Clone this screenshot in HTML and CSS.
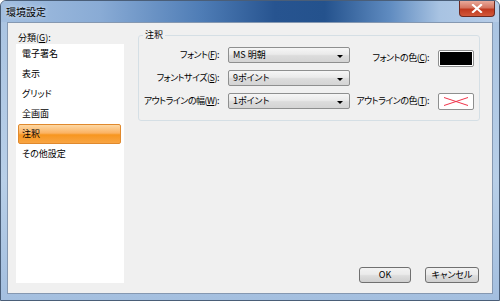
FILE: index.html
```html
<!DOCTYPE html>
<html>
<head>
    <meta charset="UTF-8">
    <title>環境設定</title>
    <link rel="stylesheet" href="styles.css">
</head>
<body>
    <div class="window">
        <div class="titlebar">
            <span class="title">環境設定</span>
            <div class="close-btn">
                <svg width="12" height="9" viewBox="0 0 12 9">
                    <path d="M2 1 L10 8 M10 1 L2 8" stroke="#fff" stroke-width="2.2" stroke-linecap="square"/>
                </svg>
            </div>
        </div>

        <div class="client">
            <div class="side">
                <div class="side-label">分類(<u>G</u>):</div>
                <ul class="category-list">
                    <li>電子署名</li>
                    <li>表示</li>
                    <li>グリッド</li>
                    <li>全画面</li>
                    <li class="selected">注釈</li>
                    <li>その他設定</li>
                </ul>
            </div>

            <div class="main">
                <fieldset class="group">
                    <legend>注釈</legend>
                    <div class="form-grid">
                        <label class="label">フォント(<u>F</u>):</label>
                        <div class="combo"><span>MS 明朝</span><span class="arrow"></span></div>
                        <label class="label label-color">フォントの色(<u>C</u>):</label>
                        <div class="swatch swatch-black"><div class="swatch-fill"></div></div>

                        <label class="label">フォントサイズ(<u>S</u>):</label>
                        <div class="combo"><span>9ポイント</span><span class="arrow"></span></div>
                        <div></div>
                        <div></div>

                        <label class="label">アウトラインの幅(<u>W</u>):</label>
                        <div class="combo"><span>1ポイント</span><span class="arrow"></span></div>
                        <label class="label">アウトラインの色(<u>T</u>):</label>
                        <div class="swatch">
                            <svg width="34" height="15" viewBox="0 0 34 15">
                                <path d="M5 3.5 L29 11.5 M5 11.5 L29 3.5" stroke="#f0334a" stroke-width="1"/>
                            </svg>
                        </div>
                    </div>
                </fieldset>

                <div class="buttons">
                    <button class="btn btn-ok">OK</button>
                    <button class="btn btn-cancel">キャンセル</button>
                </div>
            </div>
        </div>
    </div>
</body>
</html>
```

FILE: styles.css
```css
body {
    margin: 0;
    padding: 0;
    font-family: "Noto Sans CJK JP", "Liberation Sans", sans-serif;
    font-size: 9px;
    font-feature-settings: "palt";
    color: #000;
    background: #fff;
}

u {
    text-decoration-thickness: 1px;
    text-underline-offset: 1px;
}

.window {
    width: 500px;
    height: 301px;
    box-sizing: border-box;
    display: flex;
    flex-direction: column;
    border: 1px solid #4a5e78;
    border-radius: 6px 6px 0 0;
    background: linear-gradient(to bottom, #a9c3e1, #b8cfe8 60%, #a4bfdf);
    overflow: hidden;
}

.titlebar {
    height: 21px;
    display: flex;
    align-items: flex-start;
    justify-content: space-between;
    background: linear-gradient(to right, #a3bfe0 0%, #89abd5 20%, #4f7db6 40%, #275490 55%, #24528d 65%, #5f8bc0 78%, #a8c3e2 88%, #b7cde8 100%);
}

.title {
    padding: 4px 0 0 5px;
    font-size: 10px;
    line-height: 13px;
    text-shadow: 0 0 4px rgba(255, 255, 255, 0.8);
}

.close-btn {
    width: 36px;
    height: 16px;
    margin-right: 4px;
    box-sizing: border-box;
    display: flex;
    align-items: center;
    justify-content: center;
    border: 1px solid #6d2a22;
    border-top: none;
    border-radius: 0 0 4px 4px;
    background: linear-gradient(to bottom, #e9a99a 0%, #d47561 45%, #c0391f 55%, #d2583a 100%);
}

.client {
    flex: 1;
    display: flex;
    margin: 0 6px 6px 6px;
    border: 1px solid #8598b1;
    background: #f0f0f0;
}

.side {
    width: 108px;
    flex-shrink: 0;
    padding: 9px 0 10px 8px;
    display: flex;
    flex-direction: column;
}

.side-label {
    padding-left: 2px;
    height: 12px;
    line-height: 12px;
}

.category-list {
    list-style: none;
    margin: 0;
    padding: 0 3px 0 2px;
    flex: 1;
    background: #fff;
}

.category-list li {
    height: 20px;
    line-height: 20px;
    padding-left: 4px;
}

.category-list .selected {
    height: 18px;
    line-height: 18px;
    padding-left: 3px;
    border: 1px solid #e0892d;
    border-radius: 2px;
    background: linear-gradient(to bottom, #fdd8a4 0%, #fbb262 45%, #f7961f 55%, #f8a544 100%);
}

.main {
    flex: 1;
    min-width: 0;
    margin-left: 14px;
    margin-right: 12px;
    padding: 6px 0 10px 0;
    display: flex;
    flex-direction: column;
}

.group {
    margin: 0;
    min-width: 0;
    padding: 0 0 11px 0;
    border: 1px solid #d5dfe5;
    border-radius: 3px;
}

.group legend {
    margin-left: 4px;
    padding: 0 2px;
    line-height: 12px;
}

.form-grid {
    margin-top: 6px;
    display: grid;
    grid-template-columns: 80px 122px 70px 36px;
    grid-template-rows: 16px 16px 16px;
    column-gap: 9px;
    row-gap: 7px;
    padding-right: 7px;
}

.label {
    display: flex;
    justify-content: flex-end;
    white-space: nowrap;
    line-height: 16px;
    letter-spacing: -0.5px;
}

.label-color {
    margin-top: 3px;
}

.combo {
    height: 16px;
    box-sizing: border-box;
    display: flex;
    align-items: center;
    justify-content: space-between;
    padding: 0 6px 0 4px;
    border: 1px solid #8e8f8f;
    border-radius: 2px;
    background: linear-gradient(to bottom, #f6f6f6 0%, #eaeaea 45%, #dcdcdc 55%, #d4d4d4 100%);
    line-height: 14px;
}

.arrow {
    width: 0;
    height: 0;
    margin-top: 2px;
    border-left: 3px solid transparent;
    border-right: 3px solid transparent;
    border-top: 3px solid #000;
}

.swatch {
    width: 36px;
    height: 17px;
    box-sizing: border-box;
    border: 1px solid #8e8f8f;
    border-radius: 2px;
    background: #fff;
    display: flex;
    align-items: center;
    justify-content: center;
}

.swatch-black {
    margin-top: 3px;
    padding: 1px;
}

.swatch-fill {
    width: 100%;
    height: 100%;
    background: #000;
}

.buttons {
    margin-top: auto;
    display: flex;
    justify-content: flex-end;
    gap: 14px;
    padding-right: 1px;
}

.btn {
    height: 16px;
    padding: 0;
    box-sizing: border-box;
    font-family: "Noto Sans CJK JP", "Liberation Sans", sans-serif;
    font-size: 9px;
    font-feature-settings: "palt";
    line-height: 14px;
    color: #000;
    border: 1px solid #707070;
    border-radius: 3px;
    background: linear-gradient(to bottom, #f2f2f2 0%, #ebebeb 45%, #dddddd 55%, #cfcfcf 100%);
}

.btn-ok {
    width: 52px;
}

.btn-cancel {
    width: 54px;
}
```
